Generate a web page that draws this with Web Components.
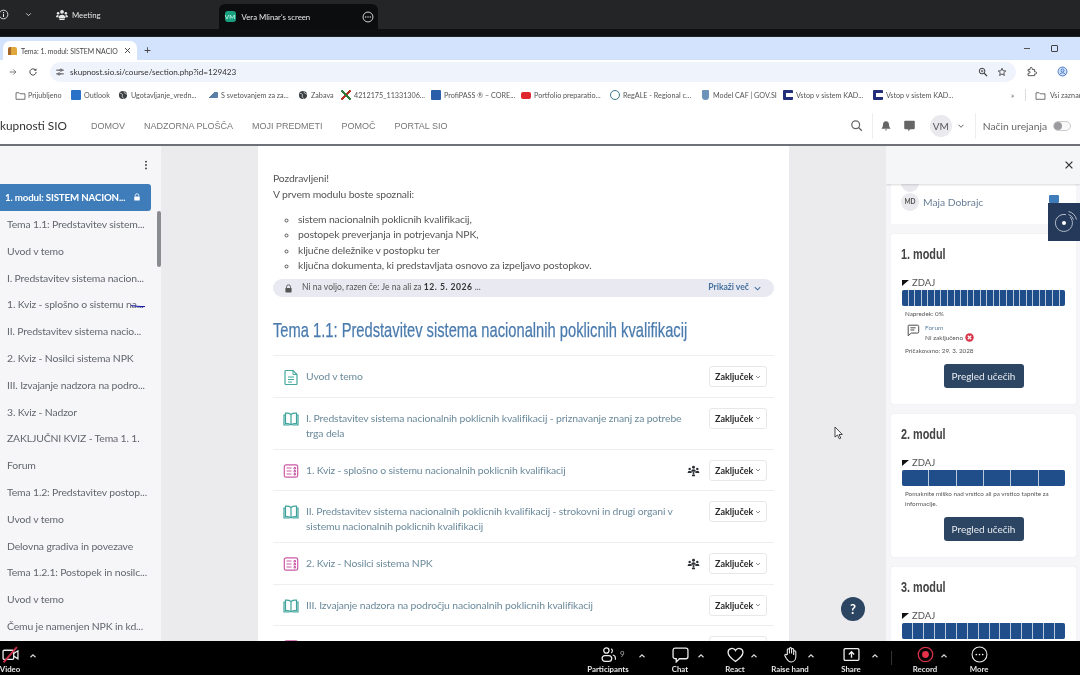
<!DOCTYPE html>
<html lang="sl">
<head>
<meta charset="utf-8">
<title>Tema: 1. modul</title>
<style>
  html, body { margin: 0; height: 100%; overflow: hidden; background: #000; }
  body { display: flex; flex-direction: column; width: 1080px; height: 675px; font-family: "Lato", "Liberation Sans", sans-serif; filter: blur(.35px); }
</style>
</head>
<body>
<zoom-top></zoom-top>
<browser-chrome></browser-chrome>
<site-nav></site-nav>
<course-page>
  <course-index slot="left"></course-index>
  <section-content slot="main">
    <activity-row icon="doc">Uvod v temo</activity-row>
    <activity-row icon="book">I. Predstavitev sistema nacionalnih poklicnih kvalifikacij - priznavanje znanj za potrebe trga dela</activity-row>
    <activity-row icon="quiz" group>1. Kviz - splošno o sistemu nacionalnih poklicnih kvalifikacij</activity-row>
    <activity-row icon="book">II. Predstavitev sistema nacionalnih poklicnih kvalifikacij - strokovni in drugi organi v sistemu nacionalnih poklicnih kvalifikacij</activity-row>
    <activity-row icon="quiz" group>2. Kviz - Nosilci sistema NPK</activity-row>
    <activity-row icon="book">III. Izvajanje nadzora na področju nacionalnih poklicnih kvalifikacij</activity-row>
    <activity-row icon="quiz" nolabel></activity-row>
  </section-content>
  <block-drawer slot="right">
    <module-card title="1. modul" segments="25">
      <p class="small">Napredek: 0%</p>
      <div class="forum">
        <ui-icon name="forum" size="14"></ui-icon>
        <div><a style="color:#5b7f9e">Forum</a><br>Ni zaključeno <ui-icon name="fail" size="9"></ui-icon></div>
      </div>
      <p class="small">Pričakovano: 29. 3. 2028</p>
    </module-card>
    <module-card title="2. modul" segments="6">
      <p class="small hint">Pomaknite miško nad vrstico ali pa vrstico tapnite za informacije.</p>
    </module-card>
    <module-card title="3. modul" segments="15"></module-card>
  </block-drawer>
</course-page>
<zoom-bar></zoom-bar>

<script>
const ICONS = {
  doc: '<path d="M3 1.500h7l4 4v9a1 1 0 0 1-1 1H3a1 1 0 0 1-1-1v-12a1 1 0 0 1 1-1z" fill="none" stroke="#45a89e" stroke-width="1.200"/><path d="M10 1.500v4h4M5 8h6M5 10.500h6M5 13h4" fill="none" stroke="#45a89e" stroke-width="1"/>',
  book: '<path d="M8 3.500C6.500 2.300 4.500 2 2.500 2.200v10.400c2-.2 4 .1 5.500 1.300 1.500-1.200 3.500-1.500 5.500-1.300V2.200C11.500 2 9.500 2.300 8 3.500zM8 3.500v10.400" fill="none" stroke="#3fa39b" stroke-width="1.200"/><path d="M2.500 4H1v10h5.500M13.500 4H15v10H9.500" fill="none" stroke="#3fa39b" stroke-width="1.200"/>',
  quiz: '<rect x="1.300" y="1.800" width="13.400" height="12.400" rx="1.800" fill="none" stroke="#cc5aa5" stroke-width="1.200"/><path d="M3.500 5h5M3.500 8h5M3.500 11h5M11 4.500h1.500v1.500H11zM11 7.500h1.500V9H11zM11 10.500h1.500V12H11z" fill="none" stroke="#cc5aa5" stroke-width="1"/>',
  group: '<g fill="#2a2e33"><circle cx="8" cy="4" r="1.800"/><path d="M5.200 9.500c0-2 1.200-3 2.800-3s2.800 1 2.800 3z"/><circle cx="3.300" cy="6" r="1.500"/><path d="M.8 11c0-1.800 1-2.700 2.500-2.700S5.800 9.200 5.800 11z"/><circle cx="12.700" cy="6" r="1.500"/><path d="M10.200 11c0-1.800 1-2.700 2.500-2.700s2.500.9 2.500 2.700z"/><circle cx="8" cy="11" r="1.300"/><path d="M6 15c0-1.500.8-2.300 2-2.300s2 .8 2 2.300z"/></g>',
  chev: '<path d="M4 6l4 4 4-4" fill="none" stroke="currentColor" stroke-width="1.500"/>',
  up: '<path d="M4 10l4-4 4 4" fill="none" stroke="currentColor" stroke-width="1.800"/>',
  lock: '<path d="M4.500 7V5a3.500 3.500 0 0 1 7 0v2" fill="none" stroke="currentColor" stroke-width="1.600"/><rect x="2.500" y="7" width="11" height="8" rx="1.200" fill="currentColor"/>',
  search: '<circle cx="7" cy="7" r="4.800" fill="none" stroke="currentColor" stroke-width="1.500"/><path d="M10.500 10.500l4 4" stroke="currentColor" stroke-width="1.700"/>',
  bell: '<path d="M8 1.500c-2.800 0-4 2-4 4.500 0 3-1.500 4.500-2 5.500h12c-.5-1-2-2.500-2-5.500 0-2.500-1.200-4.500-4-4.500z" fill="currentColor"/><path d="M6.300 12.800a1.800 1.800 0 0 0 3.400 0z" fill="currentColor"/>',
  msg: '<path d="M2.500 2h11a1 1 0 0 1 1 1v8.500a1 1 0 0 1-1 1H9l-2.500 2.500V12.500h-4a1 1 0 0 1-1-1V3a1 1 0 0 1 1-1z" fill="currentColor"/>',
  forum: '<path d="M3 2.500h10a1.500 1.500 0 0 1 1.500 1.500v6a1.500 1.500 0 0 1-1.500 1.500H6L2.500 14.500V4A1.500 1.500 0 0 1 3 2.500z" fill="none" stroke="#444" stroke-width="1.100"/><path d="M5 5.500h6M5 8h4.500" stroke="#444" stroke-width="1.100"/>',
  fail: '<circle cx="8" cy="8" r="7.500" fill="#d8344a"/><path d="M5 5l6 6M11 5l-6 6" stroke="#fff" stroke-width="2.200"/>',
  close: '<path d="M3.500 3.500l9 9M12.500 3.500l-9 9" stroke="currentColor" stroke-width="1.700"/>',
  folder: '<path d="M1.500 4h4.500l1.500 1.500h7v8h-13z" fill="none" stroke="currentColor" stroke-width="1.200"/>',
  globe: '<circle cx="8" cy="8" r="6.500" fill="#3c4043"/><path d="M3 5c2 1 3 .5 4 2s-1 2 0 4 2 2 2 3M10 2c-1 1.500 0 2.500 1.500 3s1.500 2 3 2" fill="none" stroke="#e8eaed" stroke-width="1.300"/>',
  star: '<path d="M8 2l1.800 4 4.200.4-3.200 2.800 1 4.300L8 11.200 4.200 13.500l1-4.300L2 6.400 6.200 6z" fill="none" stroke="currentColor" stroke-width="1.300"/>',
  zoomlens: '<circle cx="6.500" cy="6.500" r="4.500" fill="none" stroke="currentColor" stroke-width="1.500"/><path d="M10 10l4.500 4.500" stroke="currentColor" stroke-width="1.800"/><path d="M4.500 6.500h4M6.500 4.500v4" stroke="currentColor" stroke-width="1.100"/>',
  puzzle: '<path d="M3 5h3V3.500a1.500 1.500 0 0 1 3 0V5h3.500v3.500H14a1.500 1.500 0 0 1 0 3h-1.500V14H3v-3.500h1.500a1.500 1.500 0 0 0 0-3H3z" fill="none" stroke="currentColor" stroke-width="1.300"/>',
  profile: '<circle cx="8" cy="8" r="6.500" fill="#d3e3fd" stroke="#3367b8" stroke-width="1.200"/><circle cx="8" cy="6.500" r="2.200" fill="none" stroke="#3367b8" stroke-width="1.200"/><path d="M3.800 12.500c1-2 2.500-2.500 4.200-2.500s3.200.5 4.200 2.500" fill="none" stroke="#3367b8" stroke-width="1.200"/>',
  reload: '<path d="M13 8a5 5 0 1 1-1.500-3.600" fill="none" stroke="currentColor" stroke-width="1.600"/><path d="M13.500 1.800v4h-4z" fill="currentColor"/>',
  forward: '<path d="M2.500 8h10M8.500 4l4 4-4 4" fill="none" stroke="currentColor" stroke-width="1.300"/>',
  tune: '<path d="M2 5h6M11 5h3M2 11h3M8 11h6" stroke="currentColor" stroke-width="1.400"/><circle cx="9.500" cy="5" r="1.700" fill="none" stroke="currentColor" stroke-width="1.300"/><circle cx="6.500" cy="11" r="1.700" fill="none" stroke="currentColor" stroke-width="1.300"/>',
  people: '<g fill="#e8e8e8"><circle cx="8" cy="3.800" r="2.500"/><path d="M3.500 12c0-3 2-4.500 4.500-4.500s4.500 1.500 4.500 4.500z"/><circle cx="2.800" cy="5.600" r="1.700"/><path d="M0 11c0-2.200 1.200-3.500 3-3.500l.5 3.500z"/><circle cx="13.200" cy="5.600" r="1.700"/><path d="M16 11c0-2.200-1.200-3.500-3-3.500l-.5 3.500z"/><path d="M4 12.500h8l-.8 2H4.800z"/></g>',
  info: '<circle cx="8" cy="8" r="6.300" fill="none" stroke="currentColor" stroke-width="1.300"/><path d="M8 7v4.500M8 4.300v1.400" stroke="currentColor" stroke-width="1.500"/>',
  dots: '<circle cx="8" cy="8" r="6.600" fill="none" stroke="currentColor" stroke-width="1.200"/><circle cx="5" cy="8" r=".9" fill="currentColor"/><circle cx="8" cy="8" r=".9" fill="currentColor"/><circle cx="11" cy="8" r=".9" fill="currentColor"/>',
  kebab: '<circle cx="8" cy="3.500" r="1.300" fill="currentColor"/><circle cx="8" cy="8" r="1.300" fill="currentColor"/><circle cx="8" cy="12.500" r="1.300" fill="currentColor"/>',
  camoff: '<rect x="1" y="4" width="10" height="8.500" rx="1" fill="none" stroke="#eee" stroke-width="1.200"/><path d="M11 7l4-2.500v7.500l-4-2.500" fill="none" stroke="#eee" stroke-width="1.200"/><path d="M1.500 15.500L14 1" stroke="#c9304a" stroke-width="1.800"/>',
  people2: '<circle cx="6" cy="4.300" r="2.500" fill="none" stroke="#eee" stroke-width="1.200"/><rect x="2" y="9" width="9" height="5.500" rx="2.700" fill="none" stroke="#eee" stroke-width="1.200"/><path d="M10.500 2.500a2.300 2.300 0 0 1 0 4M12 8.500c1.500.3 2.500 1.500 2.500 3v1.500" fill="none" stroke="#eee" stroke-width="1.100"/>',
  chat: '<path d="M3 2h10a2 2 0 0 1 2 2v6a2 2 0 0 1-2 2H7L4 15v-3H3a2 2 0 0 1-2-2V4a2 2 0 0 1 2-2z" fill="none" stroke="#eee" stroke-width="1.200"/>',
  heart: '<path d="M8 14.500C3 11 1 8.500 1 6a3.700 3.700 0 0 1 7-1.700A3.700 3.700 0 0 1 15 6c0 2.500-2 5-7 8.500z" fill="none" stroke="#eee" stroke-width="1.200"/>',
  hand: '<path d="M5 8V3.500a1 1 0 0 1 2 0V7V2.500a1 1 0 0 1 2 0V7V3.300a1 1 0 0 1 2 0V8.500V5.500a1 1 0 0 1 2 0V10c0 3-2 5-4.500 5S5.500 14 4 11.500L2.800 9.300c-.7-1.200.8-2 1.500-1z" fill="none" stroke="#eee" stroke-width="1"/>',
  share: '<rect x="1" y="2.500" width="14" height="11" rx="1" fill="none" stroke="#eee" stroke-width="1.200"/><path d="M8 11V5.500M5.500 8L8 5.500 10.500 8" fill="none" stroke="#eee" stroke-width="1.300"/>',
  record: '<circle cx="8" cy="8" r="6.800" fill="none" stroke="#d8324a" stroke-width="1.200"/><circle cx="8" cy="8" r="3.200" fill="#e5324a"/>',
  moredots: '<circle cx="8" cy="8" r="7" fill="none" stroke="#eee" stroke-width="1"/><circle cx="5" cy="8" r=".8" fill="#eee"/><circle cx="8" cy="8" r=".8" fill="#eee"/><circle cx="11" cy="8" r=".8" fill="#eee"/>'
};

class UiIcon extends HTMLElement {
  constructor() {
    super();
    this.attachShadow({ mode: 'open' });
  }
  connectedCallback() {
    const size = this.getAttribute('size') || 16;
    this.shadowRoot.innerHTML = `
      <style>:host { display: inline-flex; flex: none; vertical-align: middle; line-height: 0; }</style>
      <svg width="${size}" height="${size}" viewBox="0 0 16 16">${ICONS[this.getAttribute('name')] || ''}</svg>`;
  }
}
customElements.define('ui-icon', UiIcon);

class ZoomTop extends HTMLElement {
  constructor() {
    super();
    this.attachShadow({ mode: 'open' });
  }
  connectedCallback() {
    this.shadowRoot.innerHTML = `
      <style>
        :host { display: block; height: 36px; background: #0e0f10; color: #e6e6e6; font: 7.800px "Lato", sans-serif; }
        .bar { height: 29px; background: #242526; display: flex; align-items: center; }
        .info { margin-left: -2px; }
        .chev { margin-left: 15px; }
        .meet { margin-left: 23px; }
        .meet-label { margin-left: 4px; }
        .tab { align-self: flex-end; height: 25px; width: 159px; margin-left: 118px; box-sizing: border-box; padding: 0 4px 0 6px; background: #0c0d0e; border-radius: 6px 6px 0 0; display: flex; align-items: center; }
        .av { width: 11px; height: 11px; border-radius: 3px; background: #1a9e80; color: #d8fff0; font-size: 6.500px; display: grid; place-items: center; }
        .name { margin-left: 6px; flex: 1; }
      </style>
      <div class="bar">
        <ui-icon class="info" name="info" size="11"></ui-icon>
        <ui-icon class="chev" name="chev" size="9"></ui-icon>
        <ui-icon class="meet" name="people" size="12"></ui-icon>
        <span class="meet-label">Meeting</span>
        <div class="tab"><span class="av">VM</span><span class="name">Vera Mlinar's screen</span><ui-icon name="dots" size="12"></ui-icon></div>
      </div>`;
  }
}
customElements.define('zoom-top', ZoomTop);

class BrowserChrome extends HTMLElement {
  constructor() {
    super();
    this.attachShadow({ mode: 'open' });
  }
  get bookmarks() {
    return [
      ['folder', 'Prijubljeno', 34], ['ol', 'Outlook', 25], ['globe', 'Ugotavljanje_vredn...', 68], ['bird', 'S svetovanjem za za...', 68],
      ['globe', 'Zabava', 21], ['x', '4212175_11331306...', 68], ['pp', 'ProfiPASS ® – CORE...', 68], ['yt', 'Portfolio preparatio...', 67],
      ['ring', 'RegALE - Regional c...', 68], ['shield', 'Model CAF | GOV.SI', 61], ['kad', 'Vstop v sistem KAD...', 68], ['kad', 'Vstop v sistem KAD...', 66]
    ];
  }
  favicon(kind) {
    if (kind === 'folder') return '<ui-icon name="folder" size="11"></ui-icon>';
    if (kind === 'globe') return '<ui-icon name="globe" size="10"></ui-icon>';
    return `<i class="fav ${kind}"></i>`;
  }
  connectedCallback() {
    const marks = this.bookmarks.map(([k, t, w]) => `<span class="mark"><b class="slot">${this.favicon(k)}</b><span style="width:${w}px">${t}</span></span>`).join('');
    this.shadowRoot.innerHTML = `
      <style>
        :host { display: block; font: 8px "Lato", sans-serif; color: #444; }
        .tabs { height: 24px; background: #d3e3fd; display: flex; align-items: flex-end; border-top: 1px solid #222; box-sizing: border-box; }
        .tab { width: 134px; height: 19px; margin-left: 3px; box-sizing: border-box; padding: 0 5px; background: #fff; border-radius: 7px 7px 0 0; display: flex; align-items: center; gap: 4px; white-space: nowrap; font-size: 6.900px; }
        .tab span { flex: 1; }
        .fi { width: 9px; height: 8px; background: linear-gradient(90deg, #a5682a 35%, #e0a83c 35%); border-radius: 2px 2px 0 0; flex: none; }
        .plus { margin-left: 7px; height: 19px; font-size: 12px; line-height: 18px; }
        .win { margin-left: auto; height: 24px; display: flex; align-items: center; gap: 21px; margin-right: -7px; color: #333; }
        .win i { width: 6px; height: 1px; background: #555; display: block; }
        .win b { width: 5px; height: 5px; border: 1px solid #444; border-radius: 1px; display: block; }
        .tools { height: 23px; background: #fff; display: flex; align-items: center; color: #5f6368; padding-left: 8px; }
        .tools .rl { margin-left: 10px; color: #444; }
        .url { margin-left: 12px; flex: none; width: 966px; height: 20px; box-sizing: border-box; border-radius: 10px; background: #eff3fb; display: flex; align-items: center; padding: 0 9px 0 5px; gap: 5px; font-size: 8.150px; color: #333; }
        .url span { flex: 1; }
        .tools .px { margin-left: 10px; color: #444; }
        .tools .prof { margin-left: 20px; }
        .marks { height: 24px; background: #fff; display: flex; align-items: center; padding-left: 15px; font-size: 7.200px; color: #555; white-space: nowrap; }
        .mark { display: inline-flex; align-items: center; gap: 3px; margin-right: 9px; }
        .mark span { display: block; }
        .slot { width: 10px; display: flex; justify-content: center; }
        .fav { display: block; width: 10px; height: 10px; border-radius: 1px; flex: none; }
        .ol { background: #2a71c8; }
        .bird { background: linear-gradient(135deg, transparent 40%, #5a7fa5 40%); height: 6px; }
        .x { background: linear-gradient(45deg, transparent 42%, #2c7a3c 42% 58%, transparent 58%), linear-gradient(-45deg, transparent 42%, #b3301f 42% 58%, transparent 58%); }
        .pp { background: #2a5ea8; }
        .yt { background: #e0272f; height: 7px; border-radius: 2px; }
        .ring { border: 1.500px solid #39778a; border-radius: 50%; box-sizing: border-box; }
        .shield { width: 7px; background: #6d93b8; border-radius: 1px 1px 4px 4px; }
        .kad { background: linear-gradient(#fff 0 0) 3px 3px / 7px 4px no-repeat #232f7a; }
        .end { margin-left: auto; display: flex; align-items: center; }
        .end .sep { width: 1px; height: 12px; background: #ddd; margin: 0 9px 0 11px; }
        .end .last { display: inline-flex; gap: 4px; align-items: center; width: 45px; }
      </style>
      <div class="tabs">
        <div class="tab"><i class="fi"></i><span>Tema: 1. modul: SISTEM NACIO</span><ui-icon name="close" size="9"></ui-icon></div>
        <div class="plus">+</div>
        <div class="win"><i></i><b></b><ui-icon name="close" size="8"></ui-icon></div>
      </div>
      <div class="tools">
        <ui-icon name="forward" size="10"></ui-icon>
        <ui-icon class="rl" name="reload" size="10"></ui-icon>
        <div class="url"><ui-icon name="tune" size="10"></ui-icon><span>skupnost.sio.si/course/section.php?id=129423</span><ui-icon name="zoomlens" size="10"></ui-icon><ui-icon name="star" size="10" style="margin-left:4px"></ui-icon></div>
        <ui-icon class="px" name="puzzle" size="11"></ui-icon>
        <ui-icon class="prof" name="profile" size="11"></ui-icon>
      </div>
      <div class="marks">${marks}
        <span class="end">»<i class="sep"></i><span class="last"><ui-icon name="folder" size="11"></ui-icon><span>Vsi zaznamki</span></span></span>
      </div>`;
  }
}
customElements.define('browser-chrome', BrowserChrome);

class SiteNav extends HTMLElement {
  constructor() {
    super();
    this.attachShadow({ mode: 'open' });
  }
  connectedCallback() {
    this.shadowRoot.innerHTML = `
      <style>
        :host { display: flex; align-items: center; height: 37px; background: #fff; border-bottom: 2px solid #6e7278; color: #777; font: 9px "Liberation Sans", sans-serif; }
        .brand { width: 91px; flex: none; box-sizing: border-box; font: 11.800px "Lato", sans-serif; color: #333; white-space: nowrap; }
        nav { display: flex; gap: 19px; }
        .right { margin-left: auto; display: flex; align-items: center; height: 100%; }
        .search { color: #666; }
        .sep { width: 1px; height: 26px; background: #eee; margin: 0 7px 0 9px; }
        .bell { color: #666; }
        .msg { color: #666; margin-left: 11px; }
        .av { width: 22px; height: 22px; margin-left: 14px; border-radius: 50%; background: #e9e9ee; color: #555; display: grid; place-items: center; font: 10px "Lato", sans-serif; }
        .chev { margin-left: 4px; color: #555; }
        .edit { font: 10.300px "Lato", sans-serif; color: #666; white-space: nowrap; }
        .toggle { width: 18px; height: 10px; border: 1px solid #ccc; border-radius: 6px; margin: 0 9px 0 6px; box-sizing: border-box; position: relative; background: #fafafa; }
        .toggle::before { content: ""; position: absolute; left: 0; top: 0; width: 8px; height: 8px; border-radius: 50%; background: #9a9a9f; }
      </style>
      <div class="brand">kupnosti SIO</div>
      <nav><span>DOMOV</span><span>NADZORNA PLOŠČA</span><span>MOJI PREDMETI</span><span>POMOČ</span><span>PORTAL SIO</span></nav>
      <div class="right">
        <ui-icon class="search" name="search" size="13"></ui-icon><i class="sep"></i>
        <ui-icon class="bell" name="bell" size="12"></ui-icon>
        <ui-icon class="msg" name="msg" size="13"></ui-icon>
        <span class="av">VM</span><ui-icon class="chev" name="chev" size="10"></ui-icon><i class="sep"></i>
        <span class="edit">Način urejanja</span><span class="toggle"></span>
      </div>`;
  }
}
customElements.define('site-nav', SiteNav);

class CoursePage extends HTMLElement {
  constructor() {
    super();
    this.attachShadow({ mode: 'open' });
  }
  connectedCallback() {
    this.shadowRoot.innerHTML = `
      <style>
        :host { display: grid; grid-template-columns: 161px 97px 531px 97px 194px; height: 495px; background: #ebebee; position: relative; overflow: hidden; }
        .c { grid-column: 3; min-width: 0; overflow: hidden; }
        .l { grid-column: 1; min-width: 0; overflow: hidden; }
        .r { grid-column: 5; min-width: 0; overflow: hidden; }
        .help { position: absolute; left: 841px; top: 451px; width: 24px; height: 24px; border-radius: 50%; background: #2c4563; color: #fff; font: 700 13px/24px "Lato", sans-serif; text-align: center; }
        .cursor { position: absolute; left: 834px; top: 280px; }
      </style>
      <div class="l"><slot name="left"></slot></div>
      <div class="c"><slot name="main"></slot></div>
      <div class="r"><slot name="right"></slot></div>
      <div class="help">?</div>
      <svg class="cursor" width="10" height="14" viewBox="0 0 10 14"><path d="M1 1v10l2.500-2 1.800 3.800 1.500-.7L5 8.500h3.300z" fill="#fff" stroke="#333" stroke-width=".9"/></svg>`;
  }
}
customElements.define('course-page', CoursePage);

class CourseIndex extends HTMLElement {
  constructor() {
    super();
    this.attachShadow({ mode: 'open' });
  }
  get items() {
    return ['Tema 1.1: Predstavitev sistem...', 'Uvod v temo', 'I. Predstavitev sistema nacion...', '1. Kviz - splošno o sistemu na...',
      'II. Predstavitev sistema nacio...', '2. Kviz - Nosilci sistema NPK', 'III. Izvajanje nadzora na podro...', '3. Kviz - Nadzor',
      'ZAKLJUČNI KVIZ - Tema 1. 1.', 'Forum', 'Tema 1.2: Predstavitev postop...', 'Uvod v temo', 'Delovna gradiva in povezave',
      'Tema 1.2.1: Postopek in nosilc...', 'Uvod v temo', 'Čemu je namenjen NPK in kd...'];
  }
  connectedCallback() {
    this.shadowRoot.innerHTML = `
      <style>
        :host { display: block; height: 495px; background: #f6f6f9; position: relative; font: 10.400px "Lato", sans-serif; letter-spacing: -.14px; color: #62666e; }
        .head { height: 38px; display: flex; align-items: center; justify-content: space-between; color: #444; padding-right: 9px; margin-left: -7px; }
        .active { width: 151px; height: 27px; box-sizing: border-box; background: #3f7dba; color: #fff; border-radius: 0 3px 3px 0; display: flex; align-items: center; justify-content: space-between; padding: 0 10px 1px 5px; font-weight: 700; font-size: 9.700px; white-space: nowrap; }
        .item { height: 26.800px; line-height: 26.800px; padding-left: 7px; white-space: nowrap; }
        .thumb { position: absolute; left: 157px; top: 65px; width: 4px; height: 56px; border-radius: 2px; background: #8a8c92; }
        .scribble { position: absolute; left: 131px; top: 158px; }
      </style>
      <div class="head"><ui-icon name="kebab" size="12"></ui-icon><ui-icon name="kebab" size="12"></ui-icon></div>
      <div class="active"><span>1. modul: SISTEM NACION...</span><ui-icon name="lock" size="8"></ui-icon></div>
      ${this.items.map(t => `<div class="item">${t}</div>`).join('')}
      <i class="thumb"></i>
      <svg class="scribble" width="15" height="4" viewBox="0 0 15 4"><path d="M0 1.500c3 .5 5 1.500 14 1" fill="none" stroke="#1c1cb0" stroke-width="1.100"/></svg>`;
  }
}
customElements.define('course-index', CourseIndex);

class SectionContent extends HTMLElement {
  constructor() {
    super();
    this.attachShadow({ mode: 'open' });
  }
  connectedCallback() {
    this.shadowRoot.innerHTML = `
      <style>
        :host { display: block; height: 495px; background: #fff; box-sizing: border-box; padding: 25px 15px 0; font: 10.400px/15.600px "Lato", sans-serif; letter-spacing: -.14px; color: #555; overflow: hidden; }
        p { margin: 0; }
        ul { margin: 9.500px 0 5px; padding: 0 0 0 25px; list-style: circle; }
        .restrict { height: 18px; border-radius: 9px; background: #e9eaf1; display: flex; align-items: center; padding: 0 11px; gap: 9px; font-size: 8.600px; letter-spacing: 0; color: #555; }
        .restrict b { color: #333; letter-spacing: .5px; }
        .restrict .more { margin-left: auto; color: #46719f; font-weight: 700; display: flex; align-items: center; gap: 3px; }
        h2 { margin: 21px 0 13px; height: 24px; font: 400 21px/24px "Liberation Sans", sans-serif; letter-spacing: 0; color: #4a7bae; white-space: nowrap; width: max-content; transform: scaleX(.70); transform-origin: left center; -webkit-text-stroke: .25px #4a7bae; }
        .list { border-top: 1px solid #eee; }
      </style>
      <p>Pozdravljeni!</p>
      <p>V prvem modulu boste spoznali:</p>
      <ul>
        <li>sistem nacionalnih poklicnih kvalifikacij,</li>
        <li>postopek preverjanja in potrjevanja NPK,</li>
        <li>ključne deležnike v postopku ter</li>
        <li>ključna dokumenta, ki predstavljata osnovo za izpeljavo postopkov.</li>
      </ul>
      <div class="restrict"><ui-icon name="lock" size="9"></ui-icon><span>Ni na voljo, razen če: Je na ali za <b>12. 5. 2026</b> ...</span><span class="more">Prikaži več <ui-icon name="chev" size="11"></ui-icon></span></div>
      <h2>Tema 1.1: Predstavitev sistema nacionalnih poklicnih kvalifikacij</h2>
      <div class="list"><slot></slot></div>`;
  }
}
customElements.define('section-content', SectionContent);

class ActivityRow extends HTMLElement {
  constructor() {
    super();
    this.attachShadow({ mode: 'open' });
  }
  connectedCallback() {
    const group = this.hasAttribute('group') ? '<ui-icon class="grp" name="group" size="13"></ui-icon>' : '';
    const label = this.hasAttribute('nolabel') ? '' : 'Zaključek<ui-icon name="chev" size="8"></ui-icon>';
    this.shadowRoot.innerHTML = `
      <style>
        :host { display: flex; align-items: flex-start; padding: 10px 7px 9.600px 10px; border-bottom: 1px solid #eee; font: 10.400px/15.200px "Lato", sans-serif; letter-spacing: -.14px; color: #6b8a9b; }
        .ic { margin: 3px 7px 0 0; }
        .text { flex: 1; margin: 3px 0 -2px; min-height: 15px; padding-right: 12px; }
        .grp { margin: 4px 9px 0 0; }
        .btn { width: 58px; height: 21px; box-sizing: border-box; border: 1px solid #e8e8e8; border-radius: 3px; background: #fff; display: flex; align-items: center; padding: 0 4px 0 5px; justify-content: space-between; font: 700 9px "Lato", sans-serif; letter-spacing: 0; color: #2b2b2b; }
        .btn ui-icon { color: #666; }
      </style>
      <ui-icon class="ic" name="${this.getAttribute('icon')}" size="16"></ui-icon>
      <div class="text"><slot></slot></div>
      ${group}
      <div class="btn">${label}</div>`;
  }
}
customElements.define('activity-row', ActivityRow);

class BlockDrawer extends HTMLElement {
  constructor() {
    super();
    this.attachShadow({ mode: 'open' });
  }
  connectedCallback() {
    this.shadowRoot.innerHTML = `
      <style>
        :host { display: block; height: 495px; background: #f6f6f8; position: relative; overflow: hidden; font: 10px "Lato", sans-serif; }
        .head { position: relative; z-index: 1; height: 38px; background: #f5f6f8; box-shadow: 0 1px 2px rgba(0,0,0,.15); display: flex; align-items: center; justify-content: flex-end; padding-right: 5px; color: #333; }
        .body { padding: 0 4px 0 5px; }
        .people { background: #fff; height: 40px; margin: 0 0 10px; border-radius: 2px; box-sizing: border-box; padding: 0 0 0 10px; color: #6a8098; overflow: hidden; }
        .p { display: flex; align-items: center; gap: 4px; height: 19px; font-size: 10.300px; white-space: nowrap; position: relative; }
        .p i { width: 18px; height: 18px; border-radius: 50%; background: #e9e9ee; color: #555; font: 700 6.500px/18px "Lato", sans-serif; text-align: center; flex: none; }
        .p.hid { margin-top: -11px; }
        .p.hid u { display: block; width: 52px; height: 2px; margin-top: 1px; background: #aab2bd; }
        .sq { position: absolute; left: 148px; top: 3px; width: 10px; height: 8px; background: #3f7dba; border-radius: 1px; }
        ::slotted(module-card) { margin-bottom: 10px; }
        .widget { position: absolute; right: 0; top: 57px; width: 32px; height: 38px; background: #25395a; display: grid; place-items: center; z-index: 2; }
      </style>
      <div class="head"><ui-icon name="close" size="12"></ui-icon></div>
      <div class="body">
        <div class="people">
          <div class="p hid"><i></i><u></u></div>
          <div class="p"><i>MD</i><span>Maja Dobrajc</span><b class="sq"></b></div>
        </div>
        <slot></slot>
      </div>
      <div class="widget">
        <svg width="30" height="30" viewBox="0 0 30 30" fill="none" stroke="#d5dbe6" stroke-width=".8"><path d="M21 10a8.500 8.500 0 1 1-4-2.300"/><circle cx="15" cy="16" r="2" fill="#fff" stroke="none"/><path d="M19.500 4.500a11 11 0 0 1 8 8M19.500 7.500a8 8 0 0 1 5 5"/></svg>
      </div>`;
  }
}
customElements.define('block-drawer', BlockDrawer);

class ModuleCard extends HTMLElement {
  constructor() {
    super();
    this.attachShadow({ mode: 'open' });
  }
  connectedCallback() {
    const n = +this.getAttribute('segments');
    const last = this.getAttribute('title') === '3. modul';
    this.shadowRoot.innerHTML = `
      <style>
        :host { display: block; background: #fff; border-radius: 2px; box-sizing: border-box; padding: 10px 11px 16px 11px; font: 7px/10px "Lato", sans-serif; color: #555; box-shadow: 0 0 1px rgba(0,0,0,.15); }
        h3 { margin: 0 0 0 -1px; font: 700 15.500px/20px "Liberation Sans", sans-serif; color: #444; width: max-content; transform: scaleX(.7); transform-origin: left center; }
        .z { margin-top: 13px; font-size: 9.500px; line-height: 10px; color: #555; display: flex; align-items: center; gap: 3px; height: 11px; }
        .z i { width: 0; height: 0; border-top: 6px solid #111; border-right: 7px solid transparent; }
        .bar { margin-top: 2px; height: 16px; display: flex; gap: 1px; border-radius: 2px; overflow: hidden; background: #b9c8da; }
        .bar i { flex: 1; background: #1f4e8a; }
        .info { padding: 3px 0 0; }
        ::slotted(p) { margin: 0; padding: 0 3px; font-size: 6.300px; line-height: 9.500px; }
        ::slotted(.forum) { display: flex; gap: 5px; padding: 4px 0 3px 4px; font-size: 6.500px; line-height: 10px; }
        .btn { display: block; width: 80px; height: 24px; margin: 9px auto 0; background: #2c4563; border-radius: 3px; color: #e8ecf0; text-align: center; font: 10px/24px "Lato", sans-serif; }
      </style>
      <h3>${this.getAttribute('title')}</h3>
      <div class="z"><i></i>ZDAJ</div>
      <div class="bar">${'<i></i>'.repeat(n)}</div>
      <div class="info"><slot></slot></div>
      ${last ? '' : '<div class="btn">Pregled učečih</div>'}`;
  }
}
customElements.define('module-card', ModuleCard);

class ZoomBar extends HTMLElement {
  constructor() {
    super();
    this.attachShadow({ mode: 'open' });
  }
  connectedCallback() {
    // each tool is a 50px slot, its caret is pulled back over the slot edge
    const tool = (label, icon, extra = '') => `<div class="tool"><ui-icon name="${icon}" size="17"></ui-icon><span>${label}</span>${extra}</div>`;
    const up = ml => `<ui-icon class="up" name="up" size="10" style="margin-left:${ml}px"></ui-icon>`;
    const sp = w => `<div class="sp" style="width:${w}px"></div>`;
    this.shadowRoot.innerHTML = `
      <style>
        :host { display: flex; height: 34px; background: #000; color: #e8e8e8; font: 700 7.800px "Lato", sans-serif; align-items: stretch; }
        .tool { width: 50px; display: flex; flex-direction: column; align-items: center; justify-content: flex-end; padding-bottom: 1px; white-space: nowrap; gap: 2px; flex: none; position: relative; }
        .tool span { line-height: 9px; }
        .count { position: absolute; left: 37px; top: 8px; font-weight: 400; color: #aaa; font-size: 8px; }
        .up { width: 10px; align-self: flex-start; margin-top: 10px; color: #ddd; flex: none; }
        .sp { flex: none; }
        .sep { width: 1px; height: 14px; background: #333; margin-top: 10px; flex: none; }
        .video { margin-left: -15px; }
      </style>
      <div class="tool video"><ui-icon name="camoff" size="17"></ui-icon><span>Video</span></div>${up(-7)}${sp(545)}
      ${tool('Participants', 'people2', '<b class="count">9</b>')}${up(4)}${sp(8)}
      ${tool('Chat', 'chat')}${up(-9)}${sp(4)}
      ${tool('React', 'heart')}${up(-11)}${sp(6)}
      ${tool('Raise hand', 'hand')}${up(-9)}${sp(10)}
      ${tool('Share', 'share')}${up(-6)}${sp(11)}
      <i class="sep"></i>${sp(8)}
      ${tool('Record', 'record')}${up(-11)}${sp(5)}
      ${tool('More', 'moredots')}`;
  }
}
customElements.define('zoom-bar', ZoomBar);
</script>
</body>
</html>
